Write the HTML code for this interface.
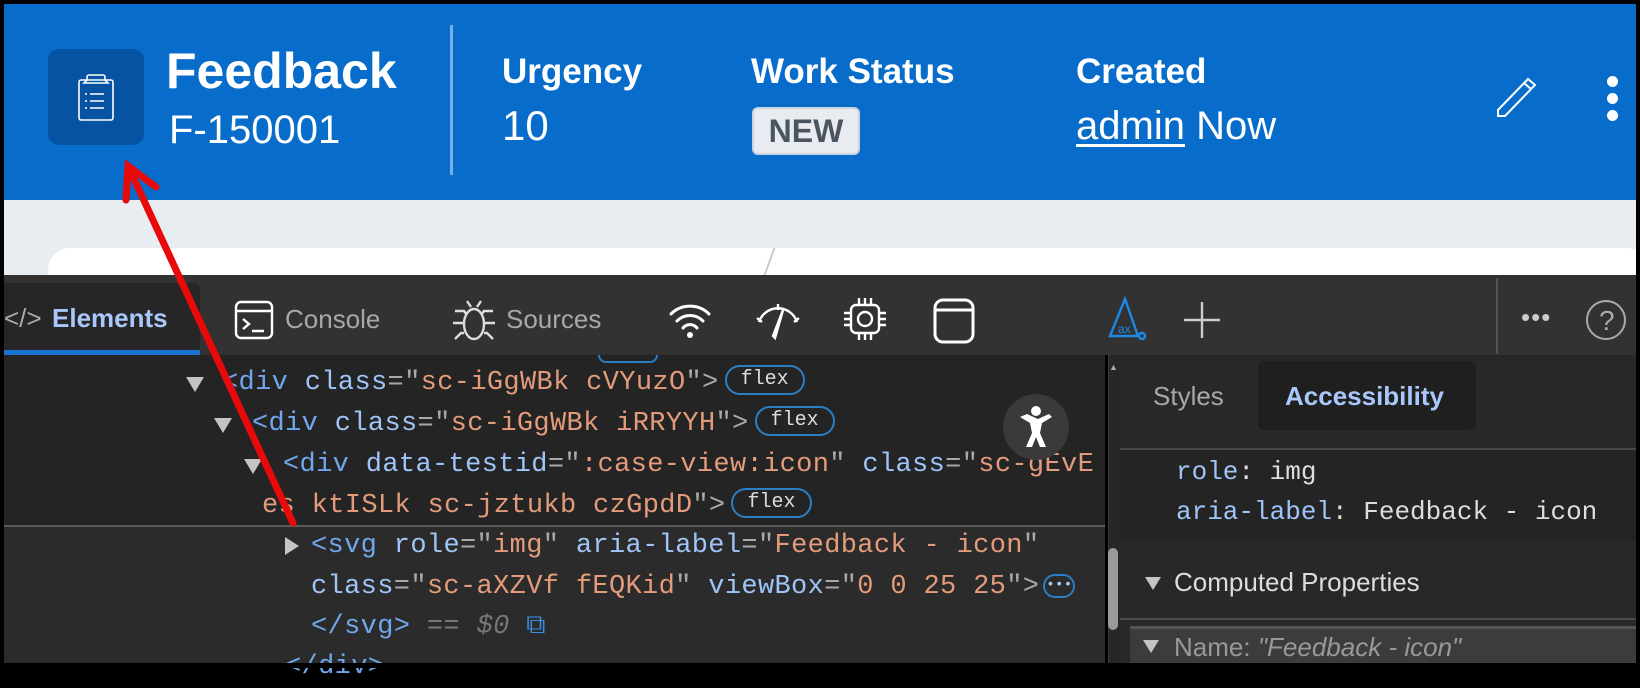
<!DOCTYPE html>
<html><head><meta charset="utf-8"><style>
*{margin:0;padding:0;box-sizing:border-box}
body{width:1640px;height:668px;overflow:hidden;background:#000;position:relative;font-family:"Liberation Sans",sans-serif}
.a{position:absolute;white-space:nowrap}
#hdr{left:4px;top:4px;width:1632px;height:196px;background:#086cca}
#gray{left:4px;top:200px;width:1632px;height:80px;background:#e8edf2}
#card{left:48px;top:248px;width:1600px;height:60px;background:#fff;border-radius:22px}
#tb{left:4px;top:275px;width:1632px;height:80px;background:#323232}
#main{left:4px;top:355px;width:1101px;height:308px;background:#242424}
#right{left:1120px;top:355px;width:516px;height:308px;background:#282828}
.code{font-family:"Liberation Mono",monospace;font-size:27px;line-height:41px;color:#a9a9a9;letter-spacing:0.35px}
.t{color:#70a7ec}.n{color:#9fc5f8}.v{color:#e39b7b}
.flex{display:inline-block;border:2px solid #2b7fc4;border-radius:15px;font-size:20px;line-height:26px;padding:0 14px;color:#ddd;vertical-align:middle;margin-left:6px;position:relative;top:-2px;letter-spacing:0}
.tri{position:absolute;width:0;height:0;border-left:9px solid transparent;border-right:9px solid transparent;border-top:15px solid #c4c4c4}
.ui{font-size:26px;color:#a8a8a8}
</style></head><body>
<div class="a" id="hdr"></div>
<div class="a" style="left:48px;top:49px;width:96px;height:96px;background:#0753a3;border-radius:11px"></div>
<svg class="a" style="left:76px;top:72px" width="40" height="50" viewBox="0 0 40 50"><g fill="none" stroke="#fff" stroke-width="1.6"><rect x="3" y="8" width="34" height="40" rx="2"/><path d="M11 8v-3a2 2 0 0 1 2-2h14a2 2 0 0 1 2 2v3l3 3H8z"/><path d="M14 22h14M14 29h14M14 36h14"/></g><g fill="#fff"><circle cx="10" cy="22" r="1"/><circle cx="10" cy="29" r="1"/><circle cx="10" cy="36" r="1"/></g></svg>
<div class="a" style="left:166px;top:42px;font-size:50px;font-weight:bold;color:#fff">Feedback</div>
<div class="a" style="left:169px;top:108px;font-size:40px;color:#fff">F-150001</div>
<div class="a" style="left:450px;top:25px;width:3px;height:150px;background:#7aaee6"></div>
<div class="a" style="left:502px;top:52px;font-size:35px;font-weight:bold;color:#fff">Urgency</div>
<div class="a" style="left:502px;top:102px;font-size:42px;color:#fff">10</div>
<div class="a" style="left:751px;top:52px;font-size:35px;font-weight:bold;color:#fff">Work Status</div>
<div class="a" style="left:752px;top:107px;width:108px;height:48px;background:#e8ecf0;border:2px solid #c7d3df;border-radius:6px;font-size:32px;font-weight:bold;color:#4a5560;text-align:center;line-height:44px">NEW</div>
<div class="a" style="left:1076px;top:52px;font-size:35px;font-weight:bold;color:#fff">Created</div>
<div class="a" style="left:1076px;top:104px;font-size:40px;color:#fff"><span style="text-decoration:underline;text-decoration-thickness:3px;text-underline-offset:5px">admin</span> Now</div>
<svg class="a" style="left:1494px;top:74px" width="46" height="46" viewBox="0 0 46 46"><g fill="none" stroke="#fff" stroke-width="2"><path d="M4 36l30-31 7 6-30 31H4z"/><path d="M30 9l7 6"/></g></svg>
<div class="a" style="left:1607px;top:76px;width:11px;height:11px;border-radius:50%;background:#fff"></div>
<div class="a" style="left:1607px;top:93px;width:11px;height:11px;border-radius:50%;background:#fff"></div>
<div class="a" style="left:1607px;top:110px;width:11px;height:11px;border-radius:50%;background:#fff"></div>

<div class="a" id="gray"></div>
<div class="a" id="card"></div>
<div class="a" style="left:768px;top:248px;width:2px;height:30px;background:#c8c8c8;transform:skewX(-20deg)"></div>

<div class="a" id="tb"></div>
<div class="a" style="left:4px;top:283px;width:196px;height:72px;background:#262626;border-radius:0 6px 0 0"></div>
<div class="a" style="left:4px;top:350px;width:196px;height:5px;background:#1a73d0"></div>
<div class="a ui" style="left:4px;top:303px;color:#aaa">&lt;/&gt;</div>
<div class="a ui" style="left:52px;top:303px;color:#a8c7fa;font-weight:bold">Elements</div>
<svg class="a" style="left:234px;top:300px" width="40" height="40" viewBox="0 0 40 40"><g fill="none" stroke="#fff" stroke-width="2.4"><rect x="2" y="2" width="36" height="36" rx="5"/><path d="M2 11h36M9 19l6 5-6 5M18 31h12"/></g></svg>
<div class="a ui" style="left:285px;top:304px">Console</div>
<svg class="a" style="left:451px;top:295px" width="46" height="48" viewBox="0 0 46 48"><g fill="none" stroke="#ddd" stroke-width="2.4"><ellipse cx="23" cy="29" rx="10" ry="15"/><path d="M16 6l4 6M30 6l-4 6M4 16h9l3 4M42 16h-9l-3 4M2 28h11M44 28H33M4 44l6-6h3M42 44l-6-6h-3"/></g></svg>
<div class="a ui" style="left:506px;top:304px">Sources</div>
<svg class="a" style="left:668px;top:300px" width="44" height="40" viewBox="0 0 44 40"><g fill="none" stroke="#fff" stroke-width="3" stroke-linecap="round"><path d="M3 14a27 27 0 0 1 38 0M9 21a18 18 0 0 1 26 0M15 28a9 9 0 0 1 14 0"/></g><circle cx="22" cy="35" r="3" fill="#fff"/></svg>
<svg class="a" style="left:753px;top:298px" width="50" height="44" viewBox="0 0 50 44"><g fill="none" stroke="#fff" stroke-width="2.4"><path d="M6 24A20 20 0 0 1 44 24M4 20l5 4M46 20l-5 4M25 6v6"/><path d="M30 12L22 40 20 38z"/></g></svg>
<svg class="a" style="left:842px;top:296px" width="46" height="46" viewBox="0 0 46 46"><g fill="none" stroke="#fff" stroke-width="2.4"><rect x="9" y="9" width="28" height="28" rx="5"/><circle cx="23" cy="23" r="7"/><path d="M17 2v7M23 2v7M29 2v7M17 37v7M23 37v7M29 37v7M2 17h7M2 23h7M2 29h7M37 17h7M37 23h7M37 29h7"/></g></svg>
<svg class="a" style="left:933px;top:298px" width="42" height="46" viewBox="0 0 42 46"><g fill="none" stroke="#fff" stroke-width="3"><rect x="2" y="2" width="38" height="42" rx="8"/><path d="M2 12h38"/></g></svg>
<svg class="a" style="left:1107px;top:296px" width="40" height="46" viewBox="0 0 40 46"><g fill="none" stroke="#1a8ae6" stroke-width="2.4"><path d="M18 3L3 40h28z"/><circle cx="35" cy="40" r="3"/></g><text x="11" y="37" font-size="12" fill="#1a8ae6" font-family="Liberation Sans">ax</text></svg>
<svg class="a" style="left:1182px;top:300px" width="40" height="40"><path d="M20 2v36M2 20h36" stroke="#ccc" stroke-width="2.4"/></svg>
<div class="a" style="left:1496px;top:278px;width:2px;height:76px;background:#555"></div>
<div class="a" style="left:1521px;top:302px;font-size:26px;color:#ccc;letter-spacing:1px">•••</div>
<svg class="a" style="left:1584px;top:298px" width="44" height="44"><circle cx="22" cy="22" r="19" fill="none" stroke="#aaa" stroke-width="2"/><text x="15" y="32" font-size="28" fill="#aaa" font-family="Liberation Sans">?</text></svg>

<div class="a" id="main"></div>
<div class="a" style="left:4px;top:525px;width:1101px;height:138px;background:#2b2b2b;border-top:2px solid #5a5a5a"></div>
<div class="a" style="left:598px;top:355px;width:60px;height:8px;border:2px solid #2b7fc4;border-top:none;border-radius:0 0 12px 12px"></div>
<div class="a" style="left:1108px;top:355px;width:12px;height:308px;background:#272727;border-left:1px solid #3a3a3a"></div>
<div class="a" style="left:1109px;top:362px;font-size:9px;color:#aaa">▲</div>
<div class="a" style="left:1108px;top:548px;width:10px;height:82px;background:#9a9a9a;border-radius:5px"></div>

<div class="tri" style="left:186px;top:377px"></div>
<div class="a code" style="left:222px;top:363px"><span class="t">&lt;div</span> <span class="n">class</span>="<span class="v">sc-iGgWBk cVYuzO</span>"&gt;<span class="flex">flex</span></div>
<div class="tri" style="left:214px;top:418px"></div>
<div class="a code" style="left:252px;top:404px"><span class="t">&lt;div</span> <span class="n">class</span>="<span class="v">sc-iGgWBk iRRYYH</span>"&gt;<span class="flex">flex</span></div>
<div class="tri" style="left:244px;top:459px"></div>
<div class="a code" style="left:283px;top:445px"><span class="t">&lt;div</span> <span class="n">data-testid</span>="<span class="v">:case-view:icon</span>" <span class="n">class</span>="<span class="v">sc-gEvE</span></div>
<div class="a code" style="left:262px;top:486px"><span class="v">es ktISLk sc-jztukb czGpdD</span>"&gt;<span class="flex">flex</span></div>
<div class="a" style="left:285px;top:537px;width:0;height:0;border-top:9px solid transparent;border-bottom:9px solid transparent;border-left:14px solid #c4c4c4"></div>
<div class="a code" style="left:311px;top:526px"><span class="t">&lt;svg</span> <span class="n">role</span>="<span class="v">img</span>" <span class="n">aria-label</span>="<span class="v">Feedback - icon</span>"</div>
<div class="a code" style="left:311px;top:567px"><span class="n">class</span>="<span class="v">sc-aXZVf fEQKid</span>" <span class="n">viewBox</span>="<span class="v">0 0 25 25</span>"&gt;<span style="display:inline-block;border:2px solid #2b7fc4;border-radius:12px;width:32px;height:24px;font-size:14px;line-height:18px;text-align:center;color:#a8c7fa;vertical-align:middle;margin-left:4px">•••</span></div>
<div class="a code" style="left:311px;top:607px"><span class="t">&lt;/svg&gt;</span> <span style="color:#777">== <i>$0</i></span> <span style="color:#3b8ee8">⧉</span></div>
<div class="a code" style="left:285px;top:647px"><span class="t">&lt;/div&gt;</span></div>

<div class="a" style="left:1003px;top:394px;width:66px;height:66px;border-radius:50%;background:#3a3a3a"></div>
<svg class="a" style="left:1016px;top:405px" width="40" height="44" viewBox="0 0 40 44"><circle cx="20" cy="6" r="5" fill="#fff"/><path d="M4 12l10 6 2 10-6 14h6l4-10 4 10h6l-6-14 2-10 10-6-3-3-11 5-11-5z" fill="#fff"/></svg>

<div class="a" id="right"></div>
<div class="a" style="left:1120px;top:448px;width:516px;height:92px;background:#242424;border-top:2px solid #4a4a4a"></div>
<div class="a" style="left:1258px;top:361px;width:218px;height:69px;background:#1f1f1f;border-radius:6px"></div>
<div class="a ui" style="left:1153px;top:381px">Styles</div>
<div class="a ui" style="left:1285px;top:381px;color:#a8c7fa;font-weight:bold">Accessibility</div>
<div class="a code" style="left:1176px;top:452px;font-size:26px;letter-spacing:0"><span class="n">role</span><span style="color:#ddd">: img</span></div>
<div class="a code" style="left:1176px;top:492px;font-size:26px;letter-spacing:0"><span class="n">aria-label</span><span style="color:#ddd">: Feedback - icon</span></div>
<div class="a" style="left:1145px;top:577px;width:0;height:0;border-left:8px solid transparent;border-right:8px solid transparent;border-top:13px solid #c4c4c4"></div>
<div class="a ui" style="left:1174px;top:567px;color:#ddd">Computed Properties</div>
<div class="a" style="left:1120px;top:618px;width:516px;height:2px;background:#4a4a4a"></div>
<div class="a" style="left:1130px;top:626px;width:506px;height:37px;background:#3c3c3c;border-top:3px solid #555"></div>
<div class="a" style="left:1143px;top:640px;width:0;height:0;border-left:8px solid transparent;border-right:8px solid transparent;border-top:13px solid #c4c4c4"></div>
<div class="a ui" style="left:1174px;top:632px;color:#999">Name: <i>"Feedback - icon"</i></div>

<svg class="a" style="left:0;top:0" width="1640" height="668"><g stroke="#e8090b" stroke-width="7" stroke-linecap="round" fill="none"><path d="M293 523L128 166M126 200L128 166 156 187"/></g></svg>

<div class="a" style="left:0;top:0;width:1640px;height:4px;background:#000"></div>
<div class="a" style="left:0;top:663px;width:1640px;height:5px;background:#000"></div>
<div class="a" style="left:0;top:0;width:4px;height:668px;background:#000"></div>
<div class="a" style="left:1636px;top:0;width:4px;height:668px;background:#000"></div>
</body></html>
